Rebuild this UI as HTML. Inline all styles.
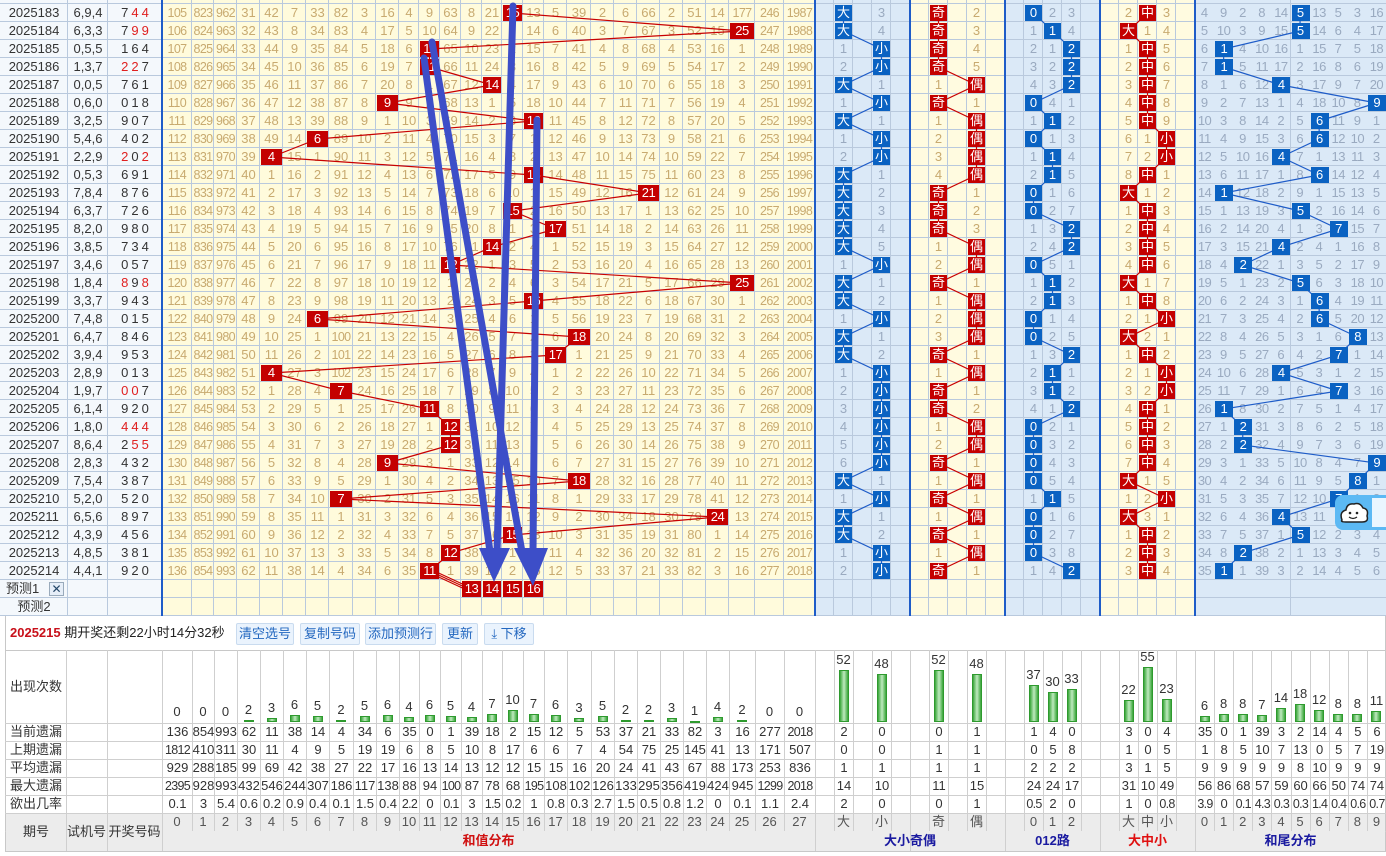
<!DOCTYPE html>
<html><head><meta charset="utf-8">
<style>
html,body{margin:0;padding:0;background:#fff;width:1386px;height:856px;overflow:hidden}
#r{position:relative;width:1386px;height:856px;font-family:"Liberation Sans","Noto Sans CJK SC",sans-serif;font-size:13px}
#r div{position:absolute;box-sizing:border-box;text-align:center;line-height:18px;white-space:nowrap;overflow:hidden}
#r svg{position:absolute;left:0;top:0}
.btn{border:1px solid #c9dbef;background:#eaf3fd;color:#2468c0;border-radius:2px;line-height:20px!important;font-size:13px}
</style></head><body><div id="r"></div>
<script>
const R=document.getElementById('r');
function d(x,y,w,h,css,txt){const e=document.createElement('div');e.style.cssText='left:'+x+'px;top:'+y+'px;width:'+w+'px;height:'+h+'px;'+(css||'');if(txt!=null)e.textContent=txt;R.appendChild(e);return e;}
const SB=[162,192,214,237,260,283,306,329,353,376,399,419,440,461,482,502,523,544,567,591,614,637,660,683,706,729,755,784,815];
const SEC=[815,910,1005,1100];
const TW=19.1;
const G='#b9c9dd';
const data=[
['2025183','6,9,4','744',15],['2025184','6,3,3','799',25],['2025185','0,5,5','164',11],['2025186','1,3,7','227',11],
['2025187','0,0,5','761',14],['2025188','0,6,0','018',9],['2025189','3,2,5','907',16],['2025190','5,4,6','402',6],
['2025191','2,2,9','202',4],['2025192','0,5,3','691',16],['2025193','7,8,4','876',21],['2025194','6,3,7','726',15],
['2025195','8,2,0','980',17],['2025196','3,8,5','734',14],['2025197','3,4,6','057',12],['2025198','1,8,4','898',25],
['2025199','3,3,7','943',16],['2025200','7,4,8','015',6],['2025201','6,4,7','846',18],['2025202','3,9,4','953',17],
['2025203','2,8,9','013',4],['2025204','1,9,7','007',7],['2025205','6,1,4','920',11],['2025206','1,8,0','444',12],
['2025207','8,6,4','255',12],['2025208','2,8,3','432',9],['2025209','7,5,4','387',18],['2025210','5,2,0','520',7],
['2025211','6,5,6','897',24],['2025212','4,3,9','456',15],['2025213','4,8,5','381',12],['2025214','4,4,1','920',11]];
// prev omission
let sp=[104,822,961,30,41,6,32,81,2,15,3,8,62,7,20,0,12,4,38,1,5,65,1,50,13,176,245,1986];
let secp=[{1:0,3:2},{1:0,3:1},{1:0,2:1,3:2},{1:1,2:0,3:2}];
let wp=[3,8,1,7,13,0,12,4,2,15];
const sumLines=[],secLines=[[],[],[],[],[]];
const boxes=[];
function secHit(s){const dx=s>=14?1:3;const jo=s%2?1:3;const m=1+s%3;const dzx=s<=8?3:(s<=17?2:1);return [dx,jo,m,dzx];}
const secLab=[{1:'大',3:'小'},{1:'奇',3:'偶'},{1:'0',2:'1',3:'2'},{1:'大',2:'中',3:'小'}];
const secBg=['#dbe9f7','#fffbe0','#dbe9f7','#fffbe0'];
const secTx=['#9aaac0','#c8aa70','#9aaac0','#c8aa70'];
const secBox=['#0a62c2','#c40000','#0a62c2','#c40000'];
function cellRow(y,i,isData){
  // left
  d(0,y,68,18,'background:#f4f8fc;border-right:1px solid '+G+';border-bottom:1px solid '+G);
  d(68,y,40,18,'background:#f4f8fc;border-right:1px solid '+G+';border-bottom:1px solid '+G);
  d(108,y,54,18,'background:#f4f8fc;border-bottom:1px solid '+G);
  for(let c=0;c<28;c++)d(SB[c],y,SB[c+1]-SB[c],18,'background:#fffbdc;border-right:1px solid '+G+';border-bottom:1px solid '+G);
  for(let s=0;s<4;s++)for(let c=0;c<5;c++)d(SEC[s]+c*19,y,19,18,'background:'+secBg[s]+';border-right:1px solid '+G+';border-bottom:1px solid '+G);
  for(let c=0;c<10;c++)d(1195+c*TW,y,TW+1,18,'background:#dbe9f7;border-right:1px solid '+G+';border-bottom:1px solid '+G);
}
for(let i=-1;i<34;i++){const y=4+18*i;cellRow(y,i);}
data.forEach((r,i)=>{
  const y=4+18*i;
  d(0,y,68,18,'color:#333',r[0]);
  d(68,y,40,18,'color:#333',r[1]);
  const digs=r[2].split('');const cnt={};digs.forEach(x=>cnt[x]=(cnt[x]||0)+1);
  const e=d(108,y,54,18,'color:#333;letter-spacing:3px;padding-left:3px');
  e.innerHTML=digs.map(x=>cnt[x]>1?'<span style="color:#e02020">'+x+'</span>':x).join('');
  const s=r[3];
  for(let c=0;c<28;c++){
    const w=SB[c+1]-SB[c];
    if(c===s){sp[c]=0;boxes.push([SB[c]+1,y+1,w-2,16,'#c40000',String(c)]);sumLines.push([(SB[c]+SB[c+1])/2,y+9]);}
    else{sp[c]++;const t=String(sp[c]);d(SB[c],y,w,18,'color:#c8aa70;'+(t.length>2?'letter-spacing:-0.6px;font-size:12.5px':''),t);}
  }
  const h=secHit(s);
  for(let k=0;k<4;k++){
    const p=secp[k];
    for(const c in p){const cc=+c;const x=SEC[k]+cc*19;
      if(cc===h[k]){p[c]=0;boxes.push([x+1,y+1,17,16,secBox[k],secLab[k][c]]);secLines[k].push([x+9.5,y+9]);}
      else{p[c]++;d(x,y,19,18,'color:'+secTx[k],String(p[c]));}
    }
  }
  const w=s%10;
  for(let c=0;c<10;c++){const x=1195+c*TW;
    if(c===w){wp[c]=0;boxes.push([x+1,y+1,TW-1,16,'#0a62c2',String(c)]);secLines[4].push([x+TW/2,y+9]);}
    else{wp[c]++;d(x,y,TW,18,'color:#9aaac0;'+(wp[c]>9?'letter-spacing:-0.5px':''),String(wp[c]));}
  }
});
// predict rows
d(0,580,68,18,'color:#333;text-align:left;padding-left:6px','预测1');
d(49,582,15,14,'border:1px solid #9ab;background:#e6eef8;color:#246;line-height:12px;font-size:12px','✕');
d(0,598,68,18,'color:#333','预测2');
[13,14,15,16].forEach(c=>boxes.push([SB[c]+1,581,SB[c+1]-SB[c]-2,16,'#c40000',String(c)]));
// blue separators
[162,815,910,1005,1100,1195].forEach(x=>d(x-1,0,2,616,'background:#1e5cc8'));
// svg lines
let svg='<svg width="1386" height="856" style="pointer-events:none">';
function poly(pts,col){if(pts.length<2)return'';return '<polyline fill="none" stroke="'+col+'" stroke-width="1.2" points="'+pts.map(p=>p.join(',')).join(' ')+'"/>';}
svg+=poly(sumLines,'#c80000');
const lc=['#1e5cc8','#c80000','#1e5cc8','#c80000','#1e5cc8'];
secLines.forEach((l,k)=>svg+=poly(l,lc[k]));
svg+='<line x1="430" y1="569" x2="471" y2="588" stroke="#c80000" stroke-width="1.2"/><line x1="430" y1="571" x2="471" y2="590" stroke="#c80000" stroke-width="1.2"/><line x1="430" y1="573" x2="471" y2="592" stroke="#c80000" stroke-width="1.2"/>';
svg+='</svg>';
R.insertAdjacentHTML('beforeend',svg);
boxes.forEach(b=>d(b[0],b[1],b[2],b[3],'background:'+b[4]+';color:#fff;line-height:16px;'+(b[5].length>1?'letter-spacing:-0.5px':''),b[5]));
// arrows
R.insertAdjacentHTML('beforeend','<svg width="1386" height="856" style="pointer-events:none"><g stroke="#3d4ec8" stroke-width="7" stroke-linecap="round"><line x1="424" y1="58" x2="490" y2="552"/><line x1="432" y1="42" x2="522" y2="552"/><line x1="513" y1="6" x2="497" y2="552"/><line x1="537" y1="120" x2="533" y2="552"/></g><g fill="#3d4ec8"><polygon points="479,548 510,548 494,582"/><polygon points="514,548 548,548 533,586"/></g></svg>');
// control bar area
d(0,616,1386,240,'background:#fff');
d(5,616,1381,236,'border:1px solid #c8c8c8;border-top:none');
d(5,650,1381,1,'background:#c8c8c8');
const cb=d(10,624,230,20,'text-align:left;color:#222;font-size:13px');
cb.innerHTML='<b style="color:#c8101a">2025215</b> 期开奖还剩22小时14分32秒';
[[236,58,'清空选号'],[300,60,'复制号码'],[365,71,'添加预测行'],[442,36,'更新'],[484,50,'⤓ 下移']].forEach(b=>d(b[0],623,b[1],22,'',b[2]).className='btn');
// stats table
const SG='#cfcfcf';
function vline(x,y0,y1){d(x,y0,1,y1-y0,'background:'+SG);}
const allCols=[];
for(let c=0;c<28;c++)allCols.push([SB[c],SB[c+1]]);
for(let s=0;s<4;s++)for(let c=0;c<5;c++)allCols.push([SEC[s]+c*19,SEC[s]+c*19+19]);
for(let c=0;c<10;c++)allCols.push([1195+c*TW,1195+(c+1)*TW]);
[66,107,162].forEach(x=>vline(x,650,851));
allCols.forEach(c=>vline(c[1],650,831));
[723,741,759,777,795,813,831].forEach(y=>d(5,y,1381,1,'background:'+SG));
// footer bg
d(6,814,1379,37,'background:#ececec');
[66,107,162].forEach(x=>vline(x,813,851));
allCols.forEach(c=>vline(c[1],813,831));
[815,910,1005,1100,1195].forEach(x=>vline(x,813,851));
d(6,813,60,38,'line-height:38px;color:#333','期号');
d(66,813,41,38,'line-height:38px;color:#333','试机号');
d(107,813,55,38,'line-height:38px;color:#333','开奖号码');
for(let c=0;c<28;c++)d(SB[c],813,SB[c+1]-SB[c],18,'color:#555',String(c));
const fl=[{1:'大',3:'小'},{1:'奇',3:'偶'},{1:'0',2:'1',3:'2'},{1:'大',2:'中',3:'小'}];
fl.forEach((o,k)=>{for(const c in o)d(SEC[k]+c*19,813,19,18,'color:#555',o[c]);});
for(let c=0;c<10;c++)d(1195+c*TW,813,TW,18,'color:#555',String(c));
d(162,832,653,19,'color:#d01010;font-weight:bold','和值分布');
d(815,832,95*2,19,'color:#1a1aa0;font-weight:bold','大小奇偶');
d(1005,832,95,19,'color:#1a1aa0;font-weight:bold','012路');
d(1100,832,95,19,'color:#e01010;font-weight:bold','大中小');
d(1195,832,191,19,'color:#1a1aa0;font-weight:bold','和尾分布');
// stats label rows
d(6,650,60,73,'line-height:73px;color:#333','出现次数');
const labs=['当前遗漏','上期遗漏','平均遗漏','最大遗漏','欲出几率'];
const sv=[
'136 854 993 62 11 38 14 4 34 6 35 0 1 39 18 2 15 12 5 53 37 21 33 82 3 16 277 2018|2 0|0 1|1 4 0|3 0 4|35 0 1 39 3 2 14 4 5 6',
'1812 410 311 30 11 4 9 5 19 19 6 8 5 10 8 17 6 6 7 4 54 75 25 145 41 13 171 507|0 0|1 1|0 5 8|1 0 5|1 8 5 10 7 13 0 5 7 19',
'929 288 185 99 69 42 38 27 22 17 16 13 14 13 12 12 15 15 16 20 24 41 43 67 88 173 253 836|1 1|1 1|2 2 2|3 1 5|9 9 9 9 9 8 10 9 9 9',
'2395 928 993 432 546 244 307 186 117 138 88 94 100 87 78 68 195 108 102 126 133 295 356 419 424 945 1299 2018|14 10|11 15|24 24 17|31 10 49|56 86 68 57 59 60 66 50 74 74',
'0.1 3 5.4 0.6 0.2 0.9 0.4 0.1 1.5 0.4 2.2 0 0.1 3 1.5 0.2 1 0.8 0.3 2.7 1.5 0.5 0.8 1.2 0 0.1 1.1 2.4|2 0|0 1|0.5 2 0|1 0 0.8|3.9 0 0.1 4.3 0.3 0.3 1.4 0.4 0.6 0.7'];
const secIdx=[[1,3],[1,3],[1,2,3],[1,2,3]];
function colRange(part,j){ // part 0 sums,1..4 sections,5 tail
  if(part===0)return [SB[j],SB[j+1]];
  if(part<5){const x=SEC[part-1]+secIdx[part-1][j]*19;return [x,x+19];}
  return [1195+j*TW,1195+(j+1)*TW];
}
function tx(t,w){return t.length>=4||(t.length===3&&w<22)?'letter-spacing:-0.7px;font-size:12.5px':'';}
labs.forEach((l,r)=>{
  const y=723+r*18;
  d(10,y,56,18,'text-align:left;color:#333',l);
  sv[r].split('|').forEach((p,pi)=>p.split(' ').forEach((t,j)=>{const c=colRange(pi,j);const w=c[1]-c[0];d(c[0],y,w+1,18,'color:#333;'+tx(t,w),t);}));
});
// bars
const counts=['0 0 0 2 3 6 5 2 5 6 4 6 5 4 7 10 7 6 3 5 2 2 3 1 4 2 0 0','52 48','52 48','37 30 33','22 55 23','6 8 8 7 14 18 12 8 8 11'];
counts.forEach((p,pi)=>p.split(' ').forEach((t,j)=>{
  const c=colRange(pi,j);const cx=(c[0]+c[1])/2;const v=+t;const h=pi===0?Math.round(v*1.2):v;
  if(v>0)d(cx-5,722-h,10,h,'background:linear-gradient(90deg,#3aa63a,#bfeabf 50%,#3aa63a);border:1px solid #2e9a2e');
  d(cx-12,722-h-19,24,18,'color:#333',t);
}));
// chat bubble
d(1335,495,51,35,'background:#5cb9f4;border-radius:8px 0 0 8px');
R.insertAdjacentHTML('beforeend','<svg width="1386" height="856" style="pointer-events:none"><path d="M1342,520 q-3,-8 4,-10 q1,-7 8,-6 q6,-2 9,4 q6,1 4,8 q2,6 -5,6 l-16,0 q-6,0 -4,-2z" fill="#fff" stroke="#222" stroke-width="1.5"/><circle cx="1350" cy="513" r="1.3" fill="#222"/><circle cx="1357" cy="513" r="1.3" fill="#222"/><path d="M1349,517 q4,3 8,0" stroke="#222" fill="none" stroke-width="1.2"/></svg>');
d(1372,498,14,29,'background:#eaf6ff');
</script></body></html>
